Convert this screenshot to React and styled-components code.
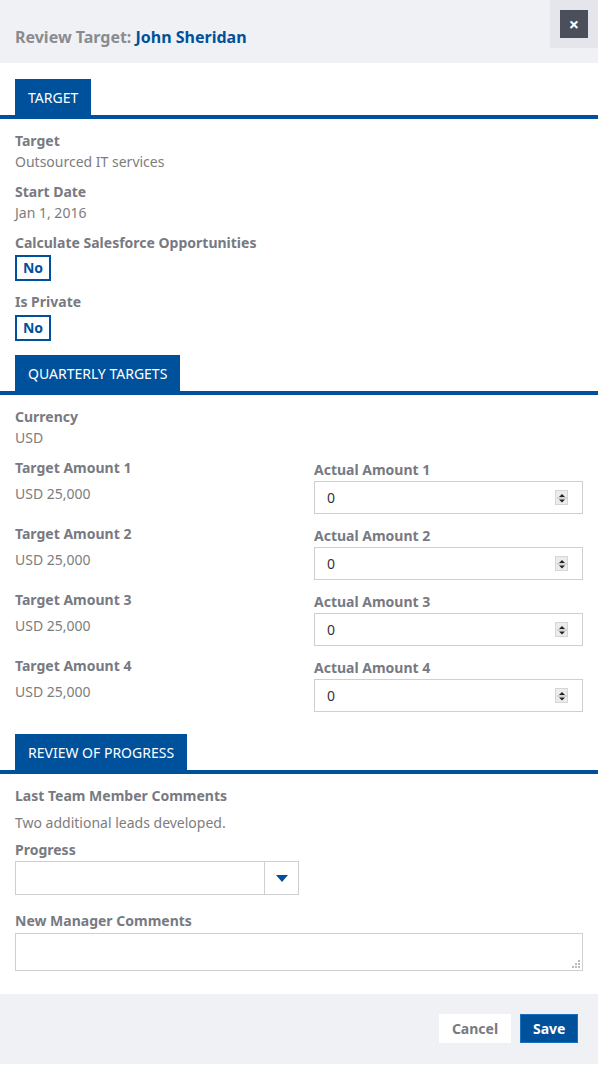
import React from "react";
import styled, { createGlobalStyle } from "styled-components";

const blue = "#00519b";
const labelGrey = "#787a82";
const textGrey = "#7d7d7d";

const GlobalStyle = createGlobalStyle`
	* { box-sizing: border-box; }
	body {
		margin: 0;
		background: #fff;
		font-family: "Noto Sans", "Open Sans", Arial, sans-serif;
		font-size: 14px;
	}
`;

const amounts = [1, 2, 3, 4];

const Spinner = () => (
	<SpinBox>
		<svg width="10" height="12" viewBox="0 0 10 12">
			<path d="M2 5 L5 2 L8 5 Z" fill="#222" />
			<line x1="0" y1="6" x2="10" y2="6" stroke="#bbb" />
			<path d="M2 7.5 L5 10.5 L8 7.5 Z" fill="#222" />
		</svg>
	</SpinBox>
);

const App = () => {
	return (
		<Modal>
			<GlobalStyle />
			<Header>
				<Title>
					Review Target: <Name>John Sheridan</Name>
				</Title>
				<CloseWrap>
					<CloseButton>×</CloseButton>
				</CloseWrap>
			</Header>

			<TabBar>
				<Tab>TARGET</Tab>
			</TabBar>
			<Section>
				<Field>
					<Label>Target</Label>
					<Value>Outsourced IT services</Value>
				</Field>
				<Field>
					<Label>Start Date</Label>
					<Value>Jan 1, 2016</Value>
				</Field>
				<Field>
					<Label>Calculate Salesforce Opportunities</Label>
					<Toggle>No</Toggle>
				</Field>
				<Field>
					<Label>Is Private</Label>
					<Toggle $top={4}>No</Toggle>
				</Field>
			</Section>

			<TabBar $top={14}>
				<Tab>QUARTERLY TARGETS</Tab>
			</TabBar>
			<Section>
				<Field>
					<Label>Currency</Label>
					<Value>USD</Value>
				</Field>
				{amounts.map((n) => (
					<AmountRow key={n}>
						<div>
							<Label>Target Amount {n}</Label>
							<Value $top={8}>USD 25,000</Value>
						</div>
						<RightCell>
							<Label>Actual Amount {n}</Label>
							<NumberBox>
								<NumberInput defaultValue="0" />
								<Spinner />
							</NumberBox>
						</RightCell>
					</AmountRow>
				))}
			</Section>

			<TabBar $top={22}>
				<Tab>REVIEW OF PROGRESS</Tab>
			</TabBar>
			<Section>
				<Field>
					<Label>Last Team Member Comments</Label>
					<Value $top={9}>Two additional leads developed.</Value>
				</Field>
				<Field $gap={9}>
					<Label>Progress</Label>
					<Select>
						<SelectText />
						<SelectArrow>
							<svg width="12" height="7" viewBox="0 0 12 7">
								<path d="M0 0 H12 L6 7 Z" fill={blue} />
							</svg>
						</SelectArrow>
					</Select>
				</Field>
				<Field $gap={17}>
					<Label>New Manager Comments</Label>
					<CommentsWrap>
						<Comments />
						<Grip>
							<svg width="8" height="8" viewBox="0 0 8 8">
								<rect x="6" y="0" width="2" height="2" fill="#bbb" />
								<rect x="3" y="3" width="2" height="2" fill="#bbb" />
								<rect x="6" y="3" width="2" height="2" fill="#bbb" />
								<rect x="0" y="6" width="2" height="2" fill="#bbb" />
								<rect x="3" y="6" width="2" height="2" fill="#bbb" />
								<rect x="6" y="6" width="2" height="2" fill="#bbb" />
							</svg>
						</Grip>
					</CommentsWrap>
				</Field>
			</Section>

			<Footer>
				<CancelButton>Cancel</CancelButton>
				<SaveButton>Save</SaveButton>
			</Footer>
		</Modal>
	);
};

export default App;

const Modal = styled.div`
	width: 598px;
	background: #fff;
`;

const Header = styled.div`
	display: flex;
	justify-content: space-between;
	align-items: flex-start;
	height: 63px;
	background: #f0f1f5;
`;

const Title = styled.h1`
	margin: 0;
	padding: 26px 0 0 15px;
	font-size: 16px;
	line-height: 22px;
	font-weight: 700;
	color: #8a8b90;
`;

const Name = styled.span`
	color: ${blue};
`;

const CloseWrap = styled.div`
	width: 48px;
	height: 48px;
	padding: 10px;
	background: #e4e6eb;
`;

const CloseButton = styled.button`
	width: 28px;
	height: 28px;
	border: none;
	padding: 0;
	background: #4a4f5b;
	color: #fff;
	font-family: "Noto Sans", Arial, sans-serif;
	font-size: 18px;
	font-weight: 700;
	line-height: 26px;
`;

const TabBar = styled.div`
	display: flex;
	margin-top: ${(p) => p.$top ?? 16}px;
	padding-left: 15px;
	border-bottom: 4px solid ${blue};
`;

const Tab = styled.div`
	height: 36px;
	padding: 0 13px;
	background: ${blue};
	color: #fff;
	font-size: 14px;
	line-height: 37px;
`;

const Section = styled.div`
	display: flex;
	flex-direction: column;
	padding: 13px 15px 0;
`;

const Field = styled.div`
	display: flex;
	flex-direction: column;
	align-items: flex-start;
	margin-top: ${(p) => p.$gap ?? 12}px;
	&:first-child {
		margin-top: 0;
	}
`;

const Label = styled.div`
	font-size: 14px;
	line-height: 18px;
	font-weight: 700;
	color: ${labelGrey};
`;

const Value = styled.div`
	margin-top: ${(p) => p.$top ?? 3}px;
	font-size: 14px;
	line-height: 18px;
	color: ${textGrey};
`;

const Toggle = styled.div`
	margin-top: ${(p) => p.$top ?? 3}px;
	width: 36px;
	height: 26px;
	border: 2px solid ${blue};
	color: ${blue};
	font-size: 14px;
	font-weight: 700;
	line-height: 22px;
	text-align: center;
`;

const AmountRow = styled.div`
	display: grid;
	grid-template-columns: 1fr 1fr;
	column-gap: 30px;
	margin-top: 11px;
	&:nth-child(2) {
		margin-top: 12px;
	}
`;

const RightCell = styled.div`
	padding-top: 2px;
`;

const NumberBox = styled.div`
	display: flex;
	align-items: center;
	margin-top: 2px;
	height: 33px;
	border: 1px solid #cfcfcf;
	padding: 0 14px 0 12px;
`;

const NumberInput = styled.input`
	flex: 1;
	min-width: 0;
	border: none;
	outline: none;
	padding: 0;
	font-family: "Noto Sans", Arial, sans-serif;
	font-size: 14px;
	color: #333;
	background: transparent;
`;

const SpinBox = styled.div`
	display: flex;
	align-items: center;
	justify-content: center;
	width: 13px;
	height: 15px;
	background: #ececec;
	border: 1px solid #d6d6d6;
`;

const Select = styled.div`
	display: flex;
	margin-top: 2px;
	width: 284px;
	height: 34px;
	border: 1px solid #cfcfcf;
	background: #fff;
`;

const SelectText = styled.div`
	flex: 1;
`;

const SelectArrow = styled.div`
	display: flex;
	align-items: center;
	justify-content: center;
	width: 34px;
	border-left: 1px solid #cfcfcf;
`;

const CommentsWrap = styled.div`
	position: relative;
	margin-top: 3px;
	width: 100%;
`;

const Comments = styled.textarea`
	display: block;
	width: 100%;
	height: 38px;
	border: 1px solid #cfcfcf;
	resize: none;
	font-family: "Noto Sans", Arial, sans-serif;
	font-size: 14px;
	outline: none;
`;

const Grip = styled.div`
	position: absolute;
	right: 3px;
	bottom: 3px;
	width: 8px;
	height: 8px;
	line-height: 0;
`;

const Footer = styled.div`
	display: flex;
	justify-content: flex-end;
	align-items: flex-start;
	gap: 9px;
	margin-top: 23px;
	height: 70px;
	padding: 20px 20px 0;
	background: #f0f1f5;
`;

const BaseButton = styled.button`
	height: 29px;
	padding: 0 12px;
	font-family: "Noto Sans", Arial, sans-serif;
	font-size: 14px;
	font-weight: 700;
`;

const CancelButton = styled(BaseButton)`
	width: 72px;
	border: none;
	background: #fff;
	color: ${labelGrey};
`;

const SaveButton = styled(BaseButton)`
	width: 58px;
	border: 1px solid #1a6fc0;
	background: ${blue};
	color: #fff;
`;
